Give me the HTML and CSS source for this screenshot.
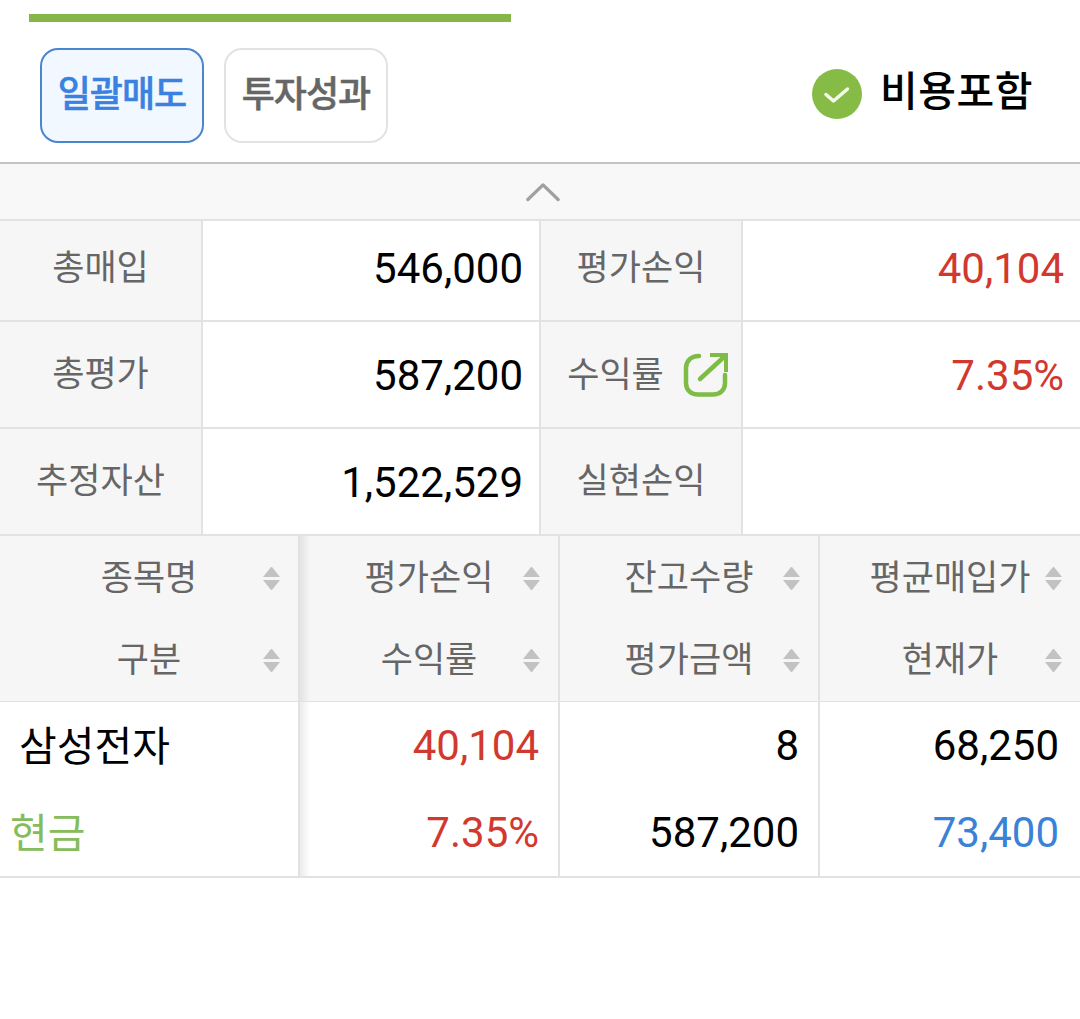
FILE: index.html
```html
<!DOCTYPE html>
<html lang="ko">
<head>
    <meta charset="UTF-8" />
    <meta name="viewport" content="width=device-width, initial-scale=1" />
    <title>잔고</title>
    <link rel="stylesheet" href="styles.css">
</head>
<body>

<div class="progress-bar"></div>

<!-- 상단 버튼 -->
<div class="top-row">
    <div class="tab-group">
        <button class="tab active" type="button"><span>일괄매도</span></button>
        <button class="tab" type="button"><span>투자성과</span></button>
    </div>
    <div class="fee-check">
        <svg class="check-icon" viewBox="0 0 50 50" width="50" height="50">
            <circle cx="25" cy="25" r="25" fill="#86bc45"/>
            <path d="M14 25.500L21.500 32L35.500 20" fill="none" stroke="#f4fbe8" stroke-width="3.500" stroke-linecap="round" stroke-linejoin="round"/>
        </svg>
        <span>비용포함</span>
    </div>
</div>

<div class="collapse-bar">
    <svg viewBox="0 0 36 21" width="34" height="20">
        <path d="M2 18.500L18 3L34 18.500" fill="none" stroke="#a0a0a0" stroke-width="3.500" stroke-linecap="round" stroke-linejoin="round"/>
    </svg>
</div>

<!-- 요약 -->
<div class="summary">
    <div class="label first">총매입</div>
    <div class="value first">546,000</div>
    <div class="label first">평가손익</div>
    <div class="value first red">40,104</div>

    <div class="label">총평가</div>
    <div class="value">587,200</div>
    <div class="label label-link">
        <span>수익률</span>
        <svg viewBox="0 0 46 46" width="46" height="46">
            <path d="M16 4C8 4 3 9 3 16V31C3 38 8 42.500 15 42.500H30C37 42.500 42 38 42 31V23" fill="none" stroke="#7fbc45" stroke-width="4.500" stroke-linecap="round"/>
            <path d="M17 27L42 4" fill="none" stroke="#7fbc45" stroke-width="4.500" stroke-linecap="round"/>
            <path d="M27 1H45V20H41V5H27Z" fill="#7fbc45"/>
        </svg>
    </div>
    <div class="value red">7.35%</div>

    <div class="label">추정자산</div>
    <div class="value">1,522,529</div>
    <div class="label">실현손익</div>
    <div class="value"></div>
</div>

<!-- 종목 테이블 -->
<div class="stock-table">
    <div class="head-cell fixed">
        <div class="head-line"><span>종목명</span><i class="sort"></i></div>
        <div class="head-line"><span>구분</span><i class="sort"></i></div>
    </div>
    <div class="head-cell">
        <div class="head-line"><span>평가손익</span><i class="sort"></i></div>
        <div class="head-line"><span>수익률</span><i class="sort"></i></div>
    </div>
    <div class="head-cell">
        <div class="head-line"><span>잔고수량</span><i class="sort"></i></div>
        <div class="head-line"><span>평가금액</span><i class="sort"></i></div>
    </div>
    <div class="head-cell">
        <div class="head-line"><span>평균매입가</span><i class="sort"></i></div>
        <div class="head-line"><span>현재가</span><i class="sort"></i></div>
    </div>

    <div class="body-cell fixed stock-name">
        <div class="stock-title">삼성전자</div>
        <div class="stock-type">현금</div>
    </div>
    <div class="body-cell">
        <div class="red">40,104</div>
        <div class="red">7.35%</div>
    </div>
    <div class="body-cell">
        <div>8</div>
        <div>587,200</div>
    </div>
    <div class="body-cell last">
        <div>68,250</div>
        <div class="blue">73,400</div>
    </div>
</div>

</body>
</html>
```

FILE: styles.css
```css
body {
    margin: 0;
    background: #fff;
    font-family: Roboto, "Noto Sans CJK KR", sans-serif;
    font-size: 38px;
    color: #000;
}

.progress-bar {
    width: 482px;
    height: 8px;
    margin-left: 29px;
    margin-top: 14px;
    background: #86b548;
}

/* 상단 버튼 */
.top-row {
    display: flex;
    justify-content: space-between;
    align-items: center;
    height: 140px;
    padding: 0 50px 0 40px;
    border-bottom: 2px solid #c4c4c4;
}
.tab-group {
    display: flex;
    gap: 20px;
    margin-top: 7px;
}
.tab {
    width: 164px;
    height: 95px;
    padding: 0 0 9px;
    background: #fff;
    border: 2px solid #e2e2e2;
    border-radius: 18px;
    font-family: inherit;
    font-size: 36px;
    font-weight: 500;
    -webkit-text-stroke: 0.500px;
    letter-spacing: -1px;
    color: #666;
}
.tab.active {
    background: #f2f8ff;
    border-color: #4a86d0;
    color: #3b82e0;
}
.fee-check {
    display: flex;
    align-items: center;
    gap: 18px;
    margin-top: 4px;
    margin-right: -3px;
    font-size: 41px;
    font-weight: 500;
    letter-spacing: 0.500px;
}
.fee-check span {
    margin-bottom: 12px;
}

.collapse-bar {
    display: flex;
    justify-content: center;
    align-items: center;
    height: 55px;
    padding-left: 6px;
    background: #f8f8f8;
    border-bottom: 2px solid #e2e2e2;
}

/* 요약 */
.summary {
    display: grid;
    grid-template-columns: 201px 336px 200px 337px;
    grid-template-rows: 99px 105px 105px;
    gap: 2px;
    background: #e2e2e2;
    padding-right: 2px;
    border-bottom: 2px solid #e2e2e2;
}
.label {
    display: flex;
    justify-content: center;
    align-items: center;
    background: #f6f6f6;
    font-size: 35px;
    color: #666;
    padding-bottom: 8px;
}
.label.first {
    padding-bottom: 12px;
}
.label-link {
    gap: 19px;
    padding: 0 0 0 14px;
}
.label-link span {
    margin-bottom: 6px;
}
.value {
    display: flex;
    justify-content: flex-end;
    align-items: center;
    background: #fff;
    padding: 2px 16px 0 0;
    font-size: 42px;
}
.value.first {
    padding: 0 16px 4px 0;
}
.red {
    color: #d1392f;
}
.blue {
    color: #3b82d6;
}

/* 종목 테이블 */
.stock-table {
    display: grid;
    grid-template-columns: 298px 258px 258px 260px;
    column-gap: 2px;
    background: #e2e2e2;
    border-bottom: 2px solid #e2e2e2;
}
.head-cell {
    display: flex;
    flex-direction: column;
    height: 165px;
    background: #f6f6f6;
    margin-bottom: 1px;
    color: #666;
    font-size: 35px;
}
.head-line {
    display: grid;
    flex: 1;
    grid-template-columns: 1fr auto 1fr;
    align-items: center;
    padding: 0 18px;
}
.head-line span {
    grid-column: 2;
    margin-bottom: 6px;
}
.sort {
    grid-column: 3;
    justify-self: end;
    display: flex;
    flex-direction: column;
    gap: 3px;
    width: 17px;
    height: 24px;
    margin-top: 3px;
}
.sort::before {
    content: "";
    border-left: 8.500px solid transparent;
    border-right: 8.500px solid transparent;
    border-bottom: 10px solid #c2c2c2;
}
.sort::after {
    content: "";
    border-left: 8.500px solid transparent;
    border-right: 8.500px solid transparent;
    border-top: 10px solid #c2c2c2;
}
.body-cell {
    display: flex;
    flex-direction: column;
    justify-content: space-around;
    height: 174px;
    padding: 0 19px 0 0;
    box-sizing: border-box;
    background: #fff;
    text-align: right;
    font-size: 42px;
}
.body-cell.last {
    padding-right: 21px;
}
.stock-name {
    text-align: left;
    padding: 0;
    font-size: 41px;
}
.stock-title {
    padding-left: 19px;
    margin-bottom: 6px;
}
.stock-type {
    padding-left: 10px;
    margin-bottom: 6px;
    color: #86bc5a;
}
/* 고정 컬럼 오른쪽 그림자 */
.fixed {
    position: relative;
}
.fixed::after {
    content: "";
    position: absolute;
    top: 0;
    bottom: 0;
    left: 100%;
    width: 10px;
    margin-left: 2px;
    background: linear-gradient(to right, rgba(0,0,0,0.08), rgba(0,0,0,0));
}
```
